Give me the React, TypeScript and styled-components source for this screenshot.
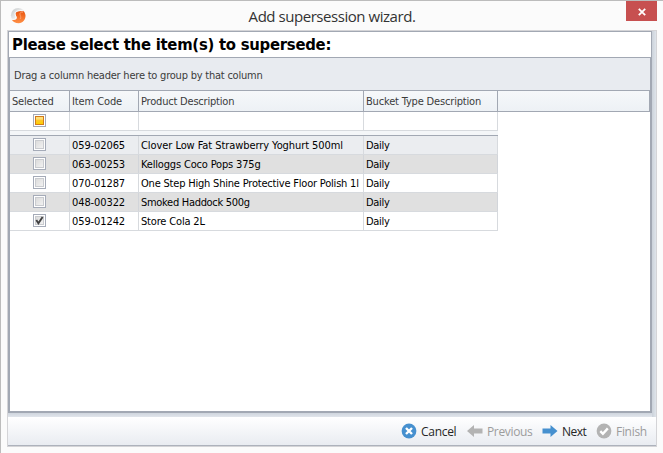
import React from 'react';
import styled, { createGlobalStyle, css } from 'styled-components';

const GlobalStyle = createGlobalStyle`
  *, *::before { box-sizing: border-box; }
  body { margin: 0; overflow: hidden; }
`;

const Window = styled.div`
  width: 663px;
  height: 453px;
  display: flex;
  flex-direction: column;
  padding-left: 6px;
  background: #fbfbfb;
  border: 1px solid #bcbcbc;
  border-width: 1px 0 0 1px;
  font-family: 'DejaVu Sans Condensed', 'DejaVu Sans', sans-serif;
  font-stretch: condensed;
  font-size: 11px;
  color: #000;
`;

const TitleBar = styled.header`
  height: 29px;
  display: grid;
  grid-template-columns: 22px 1fr 31px;
  align-items: start;
  width: 650px;
`;

const Logo = styled.svg`
  width: 16px;
  height: 18px;
  margin: 5px 0 0 3px;
`;

const Title = styled.h1`
  margin: 0;
  padding: 5px 0 0 9px;
  text-align: center;
  font: 400 15px/20px 'Open Sans', sans-serif;
  color: #333;
  letter-spacing: -0.45px;
  white-space: nowrap;
`;

const CloseButton = styled.button`
  width: 31px;
  height: 20px;
  padding: 2px 0 0;
  border: 0;
  background: #c75050;
  display: flex;
  align-items: center;
  justify-content: center;
`;

const Frame = styled.div`
  width: 650px;
  height: 417px;
  display: flex;
  flex-direction: column;
  border: 1px solid #d4d4d7;
`;

const Body = styled.main`
  height: 386px;
  padding: 0 4px 4px 0;
  background: linear-gradient(90deg, #cbd2da, #dfe4ea) right / 4px 100% no-repeat,
    linear-gradient(#cfd5dd, #e1e5eb) bottom / 100% 4px no-repeat;
`;

const Page = styled.section`
  height: 382px;
  border: 1px solid #a2a8b3;
  border-bottom-width: 2px;
  background: #fff;
`;

const Heading = styled.h2`
  height: 25px;
  margin: 0;
  padding-left: 3px;
  font: 700 16.5px/26px 'DejaVu Sans Condensed', 'DejaVu Sans', sans-serif;
  font-stretch: condensed;
  letter-spacing: -0.25px;
  white-space: nowrap;
`;

const Grid = styled.div`
  height: 354px;
  border: 1px solid #a2a8b3;
  border-bottom: 0;
`;

const GroupPanel = styled.div`
  height: 33px;
  padding-left: 4px;
  border-bottom: 1px solid #a2a8b3;
  background: #e8ebf0;
  color: #3b3b3b;
  line-height: 35px;
  letter-spacing: -0.22px;
`;

type Tone = 'header' | 'filter' | 'focus' | 'even' | 'plain';

const tones = {
  header: css`
    height: 21px;
    width: 640px;
    background: linear-gradient(#f6f8fa, #edf1f5);
    color: #3b3b3b;
    border-right: 1px solid #a2a8b3;
    border-bottom: 1px solid #a2a8b3;
    --rule: #a2a8b3;
  `,
  filter: css`background: #fff; --rule: #d7dade;`,
  focus: css`background: #ebedf0; --rule: #d7dade;`,
  even: css`background: #e0e0e0; --rule: #d2d5da;`,
  plain: css`background: #fff; --rule: #d7dade;`,
};

const Row = styled.div<{ $tone: Tone }>`
  display: grid;
  grid-template-columns: 60px 69px 225px 134px;
  width: 488px;
  height: 19px;
  border-bottom: 1px solid #d7dade;
  ${({ $tone }) => tones[$tone]}
`;

const Cell = styled.div<{ $center?: boolean; $spacing?: number }>`
  display: flex;
  align-items: center;
  justify-content: ${({ $center }) => ($center ? 'center' : 'flex-start')};
  padding-left: ${({ $center }) => ($center ? 0 : 2)}px;
  border-right: 1px solid var(--rule);
  letter-spacing: ${({ $spacing = 0 }) => $spacing}px;
  white-space: nowrap;
  overflow: hidden;
`;

const FilterGap = styled.div`
  height: 5px;
  width: 488px;
  background: #f4f6f8;
  border-bottom: 1px solid #a2a8b3;
`;

const CheckBox = styled.span<{ $mixed?: boolean }>`
  width: 13px;
  height: 13px;
  margin-bottom: 1px;
  padding: 1px;
  border: 1px solid #a5abb8;
  background: #fff;
  display: block;

  &::before {
    content: '';
    display: block;
    width: 9px;
    height: 9px;
    border: 1px solid ${({ $mixed }) => ($mixed ? '#d27b1c' : '#c9cbcf')};
    background: ${({ $mixed }) =>
      $mixed ? 'linear-gradient(#ffe07a 0 30%, #ffc62c 45%, #fbd000)' : 'linear-gradient(135deg, #dcdcdc, #f1f1f1)'};
  }

  svg {
    display: block;
    margin-top: -9px;
  }
`;

const Footer = styled.footer`
  height: 29px;
  display: flex;
  align-items: center;
  justify-content: flex-end;
  padding-right: 9px;
  background: linear-gradient(#fff, #e9ecf1);
  border-bottom: 1px solid #adb2bc;
`;

const Action = styled.button<{ $muted?: boolean; $width: number; $spacing: number }>`
  display: flex;
  align-items: center;
  gap: 4px;
  width: ${({ $width }) => $width}px;
  height: 20px;
  margin: 0;
  padding: 0;
  border: 0;
  background: none;
  font: 400 12px 'Open Sans', sans-serif;
  letter-spacing: ${({ $spacing }) => $spacing}px;
  color: ${({ $muted }) => ($muted ? '#9c9c9c' : '#262626')};

  svg {
    flex: none;
  }
`;

const Tick = () => (
  <svg width="9" height="9" viewBox="0 0 9 9">
    <path d="M1.3 4 3.4 7.2 7.6 1" fill="none" stroke="#414141" strokeWidth="1.9" />
  </svg>
);

const RoundIcon = ({ color, path }: { color: string; path: string }) => (
  <svg width="16" height="16" viewBox="0 0 16 16">
    <circle cx="8" cy="8" r="7.4" fill={color} />
    <path d={path} fill="none" stroke="#fff" strokeWidth="2.4" />
  </svg>
);

const Arrow = ({ color, back }: { color: string; back?: boolean }) => (
  <svg width="16" height="16" viewBox="0 0 16 16">
    <path d={back ? 'M0 8 7 2V5.5H15.5V10.5H7V14Z' : 'M15.5 8 8.5 2V5.5H.5V10.5H8.5V14Z'} fill={color} />
  </svg>
);

const items = [
  { code: '059-02065', name: 'Clover Low Fat Strawberry Yoghurt 500ml', spacing: -0.07, tone: 'focus' as Tone },
  { code: '063-00253', name: 'Kelloggs Coco Pops 375g', spacing: -0.17, tone: 'even' as Tone },
  { code: '070-01287', name: 'One Step High Shine Protective Floor Polish 1l', spacing: -0.2, tone: 'plain' as Tone },
  { code: '048-00322', name: 'Smoked Haddock 500g', spacing: -0.3, tone: 'even' as Tone },
  { code: '059-01242', name: 'Store Cola 2L', spacing: -0.17, tone: 'plain' as Tone, checked: true },
];

export default function App() {
  return (
    <Window>
      <GlobalStyle />
      <TitleBar>
        <Logo viewBox="0 0 16 18">
          <defs>
            <linearGradient id="silver" x2="1" y2="1">
              <stop offset="0" stopColor="#c4c8ca" />
              <stop offset=".5" stopColor="#ededed" />
              <stop offset="1" stopColor="#d5d7d8" />
            </linearGradient>
            <linearGradient id="orange" x2="0" y2="1">
              <stop offset="0" stopColor="#e9530d" />
              <stop offset="1" stopColor="#ff9046" />
            </linearGradient>
          </defs>
          <circle cx="8.2" cy="9.2" r="7.3" fill="url(#silver)" />
          <path d="M13.6 5.2C17.2 9 15.6 16.8 8.6 17.2 5.4 17.2 3.2 16 1.8 13.8 4.8 14.2 6.8 13.6 6.8 12 6.8 10.4 5.4 9.6 5.6 7.6 6 5.2 9 4.4 13.6 5.2Z" fill="url(#orange)" />
          <path d="M13 6.2C10.5 6 9.7 7 10 8.4 10.4 10.2 11.3 11 10.2 13" fill="none" stroke="#ffb588" strokeWidth=".7" />
          <path d="M12.6 4.8C8 4.2 5 5.4 5 7.6 5 9.8 6.4 10.4 6.1 12 5.8 13.2 4.2 13.5 2 13.3" fill="none" stroke="#fff" strokeWidth=".9" />
        </Logo>
        <Title>Add supersession wizard.</Title>
        <CloseButton aria-label="Close">
          <svg width="8" height="8" viewBox="0 0 8 8">
            <path d="m.8.8 6.4 6.4m0-6.4L.8 7.2" stroke="#fff" strokeWidth="1.8" />
          </svg>
        </CloseButton>
      </TitleBar>
      <Frame>
        <Body>
          <Page>
            <Heading>Please select the item(s) to supersede:</Heading>
            <Grid>
              <GroupPanel>Drag a column header here to group by that column</GroupPanel>
              <Row $tone="header">
                <Cell $spacing={-0.17}>Selected</Cell>
                <Cell $spacing={-0.1}>Item Code</Cell>
                <Cell $spacing={-0.2}>Product Description</Cell>
                <Cell $spacing={-0.17}>Bucket Type Description</Cell>
              </Row>
              <Row $tone="filter">
                <Cell $center><CheckBox $mixed /></Cell>
                <Cell />
                <Cell />
                <Cell />
              </Row>
              <FilterGap />
              {items.map(({ code, name, spacing, tone, checked }) => (
                <Row key={code} $tone={tone}>
                  <Cell $center><CheckBox>{checked && <Tick />}</CheckBox></Cell>
                  <Cell $spacing={-0.1}>{code}</Cell>
                  <Cell $spacing={spacing}>{name}</Cell>
                  <Cell $spacing={-0.3}>Daily</Cell>
                </Row>
              ))}
            </Grid>
          </Page>
        </Body>
        <Footer>
          <Action $width={66} $spacing={-0.3}><RoundIcon color="#4690cf" path="m5 5 6 6m0-6-6 6" />Cancel</Action>
          <Action $width={75} $spacing={-0.35} $muted><Arrow color="#b3b3b3" back />Previous</Action>
          <Action $width={54} $spacing={-0.5}><Arrow color="#4690cf" />Next</Action>
          <Action $width={51} $spacing={-0.3} $muted><RoundIcon color="#b3b3b3" path="m4.3 8.2 2.6 2.6 4.9-5.4" />Finish</Action>
        </Footer>
      </Frame>
    </Window>
  );
}
